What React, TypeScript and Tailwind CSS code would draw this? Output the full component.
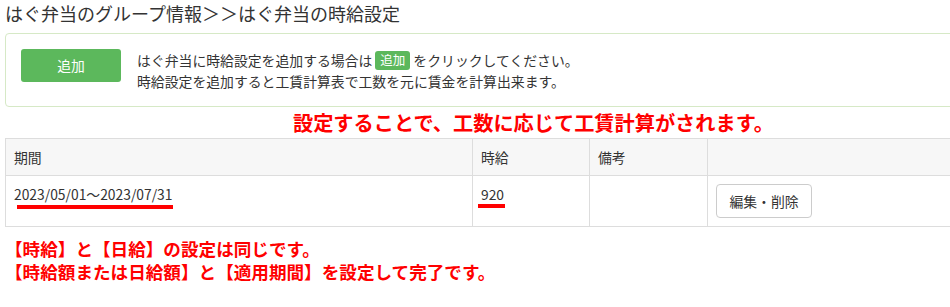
import React from "react";

export default function App() {
  return (
    <div
      className="w-[950px] h-[307px] overflow-hidden bg-white text-[#333]"
      style={{ fontFamily: '"Noto Sans CJK JP", "Noto Sans", sans-serif' }}
    >
      <div className="w-[1046px] pl-[5px]">
        <h1 className="text-[18px] leading-[27px] font-normal text-[#333]">
          はぐ弁当のグループ情報＞＞はぐ弁当の時給設定
        </h1>
        <div className="mt-[6px] border border-[#d6e9c6] rounded-[4px] px-[15px] pt-[15px] pb-[15px] flex items-start h-[74px]">
          <button className="w-[100px] h-[33px] rounded-[3px] bg-[#5cb85c] text-white text-[13.8px] flex items-center justify-center shrink-0">
            追加
          </button>
          <div className="ml-[16px] text-[13.85px] leading-[21px] mt-[1px]">
            <div className="flex items-center">
              はぐ弁当に時給設定を追加する場合は
              <span className="inline-flex items-center justify-center h-[19px] w-[35px] mx-[3px] rounded-[3px] bg-[#5cb85c] text-white text-[12.5px] leading-none">
                追加
              </span>
              をクリックしてください。
            </div>
            <div>時給設定を追加すると工賃計算表で工数を元に賃金を計算出来ます。</div>
          </div>
        </div>
        <div className="pl-[16px] text-center text-[20.2px] leading-[24px] font-bold text-[#ff0000] mt-[4px]">
          設定することで、工数に応じて工賃計算がされます。
        </div>
        <table className="mt-[3px] w-[1046px] border-collapse text-[13.85px] leading-[20px]">
          <thead>
            <tr className="bg-[#f7f7f7]">
              <th className="w-[467px] border border-[#ddd] px-[8px] py-[8px] text-left font-normal h-[37px]">期間</th>
              <th className="w-[117px] border border-[#ddd] px-[8px] py-[8px] text-left font-normal">時給</th>
              <th className="w-[118px] border border-[#ddd] px-[8px] py-[8px] text-left font-normal">備考</th>
              <th className="border border-[#ddd] px-[8px] py-[8px] text-left font-normal"></th>
            </tr>
          </thead>
          <tbody>
            <tr>
              <td className="border border-[#ddd] px-[8px] pt-[8px] pb-[8px] align-top h-[51px]">
                <span className="relative inline-block">
                  2023/05/01～2023/07/31
                  <span className="absolute left-[3px] right-[-1px] top-[21px] h-[4px] bg-[#ff0000]"></span>
                </span>
              </td>
              <td className="border border-[#ddd] px-[8px] pt-[8px] pb-[8px] align-top">
                <span className="relative inline-block">
                  920
                  <span className="absolute left-[-3px] right-[-1px] top-[20px] h-[4px] bg-[#ff0000]"></span>
                </span>
              </td>
              <td className="border border-[#ddd] px-[8px] py-[8px] align-top"></td>
              <td className="border border-[#ddd] px-[8px] py-[8px] align-top">
                <button className="w-[96px] h-[34px] border border-[#ccc] rounded-[4px] bg-white text-[13.85px] text-[#333] flex items-center justify-center">
                  編集・削除
                </button>
              </td>
            </tr>
          </tbody>
        </table>
        <div className="mt-[10px] text-[17.6px] leading-[23px] font-bold text-[#ff0000]">
          <div>【時給】と【日給】の設定は同じです。</div>
          <div>【時給額または日給額】と【適用期間】を設定して完了です。</div>
        </div>
      </div>
    </div>
  );
}
